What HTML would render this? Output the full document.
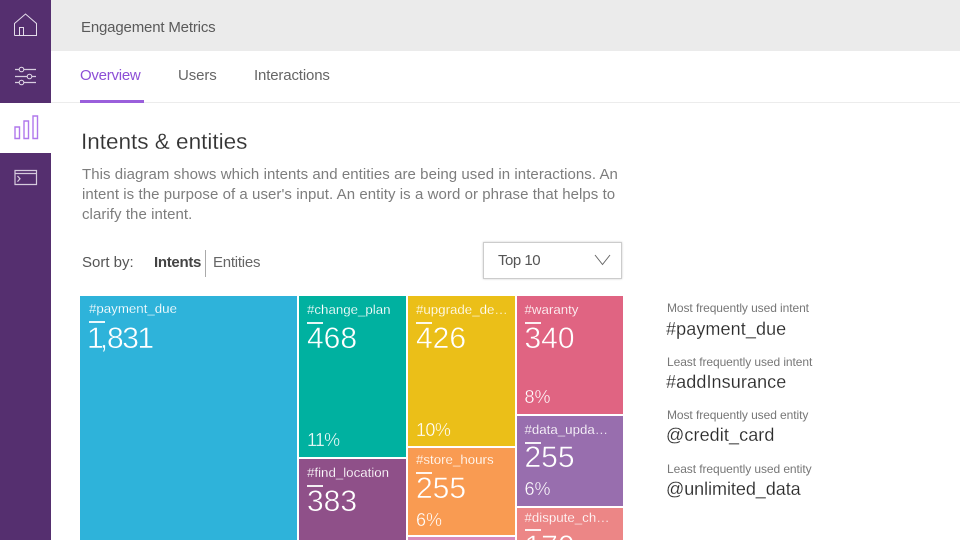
<!DOCTYPE html>
<html><head><meta charset="utf-8">
<style>
html,body{margin:0;padding:0;background:#fff}
body{width:960px;height:540px;position:relative;overflow:hidden;font-family:"Liberation Sans",sans-serif;color:#333}
.a{position:absolute;white-space:nowrap}
.t{position:absolute;overflow:hidden;color:#fff}
.t .n{position:absolute;left:8px;top:4px;font-size:13.3px;line-height:20px;white-space:nowrap;-webkit-text-stroke:.15px var(--c)}
.t .b{position:absolute;left:8px;top:26px;width:16px;height:2px;background:#fff;opacity:.9}
.t .v{position:absolute;left:8px;top:25px;font-size:30px;line-height:36px;white-space:nowrap;-webkit-text-stroke:.5px var(--c)}
.t .p{position:absolute;left:8px;font-size:18px;line-height:22px;-webkit-text-stroke:.35px var(--c)}
.s1{font-size:12px;color:#777;left:667px;line-height:16px;letter-spacing:-.08px}
.s2{font-size:18px;color:#2b2b2b;left:666px;line-height:24px;letter-spacing:.1px;-webkit-text-stroke:.15px #fff}
svg{position:absolute;overflow:visible}
</style></head><body>
<div class="a" style="left:0;top:0;width:51px;height:540px;background:#552f6f"></div>
<div class="a" style="left:0;top:103px;width:51px;height:50px;background:#fff"></div>
<svg style="left:0;top:0" width="51" height="200" fill="none" stroke="#e4dcea" stroke-width="1">
<path d="M14.5 35.5V23.5L25.5 14L36.5 23.5V35.5H14.5M19.5 35.5V27.5H23.5V35.5"/>
<path d="M15 69.5H36M15 76.5H36M15 82.5H36" stroke="#d8cde0" stroke-width="1.2"/>
<circle cx="21.5" cy="69.5" r="2.3" fill="#552f6f"/><circle cx="29.5" cy="76.5" r="2.3" fill="#552f6f"/><circle cx="21.5" cy="82.5" r="2.3" fill="#552f6f"/>
<path d="M15 127h4.5v11.5h-4.5zM24 121h4.5v17.5h-4.5zM33 116h4.5v22.5h-4.5z" stroke="#b078ec" stroke-width="1.4"/>
<path d="M15 170.5h21.5v14H15zM15 173.5h21.5M17.5 176l2.5 2.8-2.5 2.8" stroke="#d6cbdd" stroke-width="1.2"/>
</svg>
<div class="a" style="left:51px;top:0;width:909px;height:51px;background:#ebebeb"></div>
<div class="a" style="left:81px;top:18px;font-size:15px;line-height:19px;color:#5a5a5a;letter-spacing:-.17px">Engagement Metrics</div>
<div class="a" style="left:51px;top:102px;width:909px;height:1px;background:#ececec"></div>
<div class="a" style="left:80px;top:100px;width:64px;height:2.5px;background:#9a5fdb"></div>
<div class="a" style="left:80px;top:66px;font-size:15px;line-height:19px;color:#8d4fd6;letter-spacing:-.25px">Overview</div>
<div class="a" style="left:178px;top:66px;font-size:15px;line-height:19px;color:#666;letter-spacing:-.1px">Users</div>
<div class="a" style="left:254px;top:66px;font-size:15px;line-height:19px;color:#666;letter-spacing:-.15px">Interactions</div>
<div class="a" style="left:81px;top:127px;font-size:22.5px;line-height:30px;color:#333;-webkit-text-stroke:.15px #fff">Intents &amp; entities</div>
<div class="a" style="left:82px;top:165px;font-size:15px;line-height:20px;color:#7d7d7d;letter-spacing:.06px">This diagram shows which intents and entities are being used in interactions. An<br>intent is the purpose of a user's input. An entity is a word or phrase that helps to<br>clarify the intent.</div>
<div class="a" style="left:82px;top:253px;font-size:15px;line-height:19px;color:#555">Sort by:</div>
<div class="a" style="left:154px;top:253px;font-size:15px;line-height:19px;color:#444;font-weight:bold;letter-spacing:-.3px">Intents</div>
<div class="a" style="left:205px;top:250px;width:1px;height:27px;background:#aaa"></div>
<div class="a" style="left:213px;top:253px;font-size:15px;line-height:19px;color:#666;letter-spacing:-.25px">Entities</div>
<div class="a" style="left:483px;top:242px;width:137px;height:35px;border:1px solid #ccc;box-shadow:0 0 2px #ccc;background:#fff"></div>
<div class="a" style="left:498px;top:251px;font-size:15px;line-height:19px;color:#555;letter-spacing:-.5px">Top 10</div>
<svg style="left:594px;top:254px" width="18" height="12" fill="none" stroke="#666" stroke-width="1"><path d="M1 1l7.5 9.5L16 1"/></svg>

<div class="t" style="--c:#2eb3da;left:80px;top:296px;width:217px;height:244px;background:#2eb3da">
<div class="n" style="left:9px;top:3px">#payment_due</div><div class="b" style="left:9px;top:25px"></div><div class="v" style="left:7px"><span style="letter-spacing:-4px">1</span><span style="letter-spacing:-1px">,</span><span style="letter-spacing:-1.5px">83</span>1</div></div>

<div class="t" style="--c:#00b1a0;left:299px;top:296px;width:107px;height:161px;background:#00b1a0">
<div class="n">#change_plan</div><div class="b"></div><div class="v">468</div><div class="p" style="top:133px;letter-spacing:-.8px">11%</div></div>

<div class="t" style="--c:#8f5089;left:299px;top:459px;width:107px;height:81px;background:#8f5089">
<div class="n">#find_location</div><div class="b"></div><div class="v">383</div></div>

<div class="t" style="--c:#ebbf18;left:408px;top:296px;width:107px;height:150px;background:#ebbf18">
<div class="n">#upgrade_de…</div><div class="b"></div><div class="v">426</div><div class="p" style="top:123px;letter-spacing:-.6px">10%</div></div>

<div class="t" style="--c:#f99b52;left:408px;top:448px;width:107px;height:87px;background:#f99b52">
<div class="n" style="top:2px">#store_hours</div><div class="b" style="top:24px"></div><div class="v" style="top:23px">255</div><div class="p" style="top:61px">6%</div></div>

<div class="t" style="left:408px;top:537px;width:107px;height:3px;background:#d78abb"></div>

<div class="t" style="--c:#e06482;left:517px;top:296px;width:106px;height:118px;background:#e06482">
<div class="n" style="left:7.5px">#waranty</div><div class="b" style="left:7.5px"></div><div class="v" style="left:7.5px">340</div><div class="p" style="left:7.5px;top:90px">8%</div></div>

<div class="t" style="--c:#986eae;left:517px;top:416px;width:106px;height:90px;background:#986eae">
<div class="n" style="left:7.5px">#data_upda…</div><div class="b" style="left:7.5px"></div><div class="v" style="left:7.5px;top:24px">255</div><div class="p" style="left:7.5px;top:62px">6%</div></div>

<div class="t" style="--c:#ec8686;left:517px;top:508px;width:106px;height:32px;background:#ec8686">
<div class="n" style="left:7.5px;top:0">#dispute_ch…</div><div class="b" style="left:7.5px;top:21px"></div><div class="v" style="left:7.5px;top:21px">170</div></div>

<div class="a s1" style="top:300px">Most frequently used intent</div>
<div class="a s2" style="top:317px">#payment_due</div>
<div class="a s1" style="top:354px">Least frequently used intent</div>
<div class="a s2" style="top:370px">#addInsurance</div>
<div class="a s1" style="top:407px">Most frequently used entity</div>
<div class="a s2" style="top:423px">@credit_card</div>
<div class="a s1" style="top:461px">Least frequently used entity</div>
<div class="a s2" style="top:477px;letter-spacing:-.05px">@unlimited_data</div>
</body></html>
